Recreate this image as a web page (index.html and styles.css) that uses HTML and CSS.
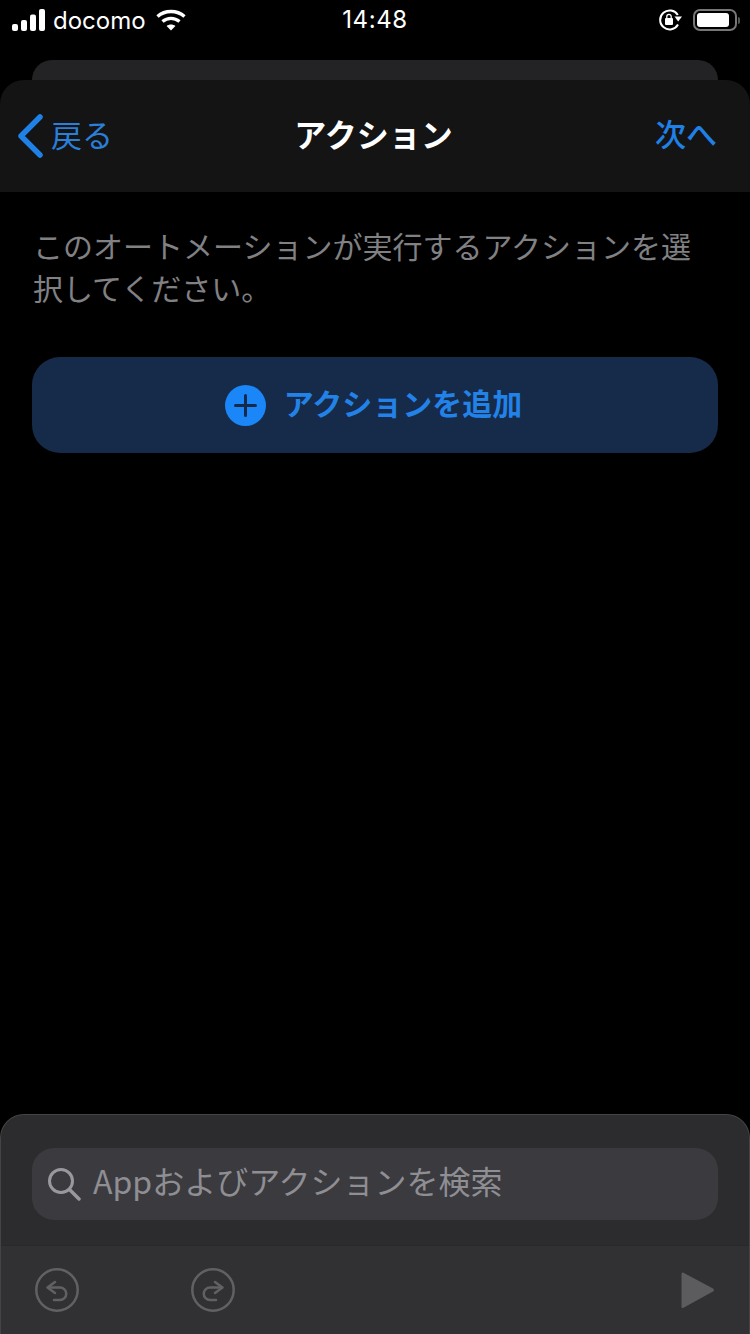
FILE: index.html
```html
<!DOCTYPE HTML>
<html lang="ja">
<head>
  <title>アクション</title>
  <meta content="text/html;charset=utf-8" http-equiv="Content-type"/>
  <meta name="viewport" content="width=device-width, initial-scale=1">
  <link rel="stylesheet" href="styles.css">
</head>
<body>
<div class="page">
  <!-- status bar -->
  <div class="status">
    <div class="status-left">
      <svg class="signal" width="34" height="22" viewBox="0 0 34 22" fill="#fff">
        <rect x="0" y="15" width="6" height="7" rx="2"/>
        <rect x="9" y="11" width="6" height="11" rx="2"/>
        <rect x="18" y="5.500" width="6" height="16.500" rx="2"/>
        <rect x="27" y="0" width="6" height="22" rx="2"/>
      </svg>
      <span class="carrier">docomo</span>
      <svg class="wifi" width="30" height="22" viewBox="0 0 30 22" fill="none" stroke="#fff" stroke-width="3.400">
        <path d="M1.500 7.500C9 .8 21 .8 28.500 7.500"/>
        <path d="M6.500 12.500C11.500 8.300 18.500 8.300 23.500 12.500"/>
        <path d="M15 21.500L10.600 17C13 15 17 15 19.400 17Z" fill="#fff" stroke="none"/>
      </svg>
    </div>
    <span class="clock">14:48</span>
    <div class="status-right">
      <svg width="24" height="22" viewBox="0 0 24 22" fill="none">
        <path d="M19 15.500A9.500 9.500 0 1 1 18.800 6" stroke="#fff" stroke-width="2"/>
        <path d="M15.500 7.500L23 7.500L19.200 12.500Z" fill="#fff"/>
        <rect x="6" y="9" width="8" height="7" rx="1" fill="#fff"/>
        <path d="M7.800 9.500V7.500a2.200 2.200 0 0 1 4.400 0V9.500" stroke="#fff" stroke-width="1.300"/>
      </svg>
      <div class="battery"><div class="battery-fill"></div></div>
      <div class="battery-tip"></div>
    </div>
  </div>

  <div class="back-card"></div>

  <!-- front sheet -->
  <div class="sheet">
    <div class="nav">
      <div class="nav-back">
        <svg width="28" height="44" viewBox="0 0 28 44" fill="none" stroke="#1f80e6" stroke-width="5.500" stroke-linecap="round" stroke-linejoin="round">
          <path d="M24 3L5 22L24 41"/>
        </svg>
        <span>戻る</span>
      </div>
      <div class="nav-title">アクション</div>
      <div class="nav-next">次へ</div>
    </div>
    <div class="content">
      <p class="intro">このオートメーションが実行するアクションを選択してください。</p>
      <div class="add-btn">
        <svg width="41" height="41" viewBox="0 0 41 41">
          <circle cx="20.500" cy="20.500" r="20.500" fill="#1a86f8"/>
          <path d="M10.500 20.500H30.500M20.500 10.500V30.500" stroke="#15294a" stroke-width="3" stroke-linecap="round"/>
        </svg>
        <span>アクションを追加</span>
      </div>
    </div>
  </div>

  <!-- bottom search panel -->
  <div class="panel">
    <div class="panel-search">
      <div class="search">
        <svg width="34" height="34" viewBox="0 0 34 34" fill="none" stroke="#98989e" stroke-width="3" stroke-linecap="round">
          <circle cx="14" cy="14" r="11.500"/>
          <path d="M22.500 22.500L32 32" stroke-width="3.500"/>
        </svg>
        <span>Appおよびアクションを検索</span>
      </div>
    </div>
    <div class="toolbar">
      <div class="toolbar-history">
        <svg width="44" height="44" viewBox="0 0 44 44" fill="none" stroke="#616164" stroke-width="2.500" stroke-linecap="round" stroke-linejoin="round">
          <circle cx="22" cy="22" r="20.700"/>
          <path d="M20 14L12.500 19.500L20 25"/>
          <path d="M13 19.500H25a6 6 0 0 1 0 12.500H19"/>
        </svg>
        <svg width="44" height="44" viewBox="0 0 44 44" fill="none" stroke="#616164" stroke-width="2.500" stroke-linecap="round" stroke-linejoin="round">
          <circle cx="22" cy="22" r="20.700"/>
          <path d="M24 14L31.500 19.500L24 25"/>
          <path d="M31 19.500H19a6 6 0 0 0 0 12.500H25"/>
        </svg>
      </div>
      <svg class="play" width="34" height="38" viewBox="0 0 34 38">
        <path d="M2 1.500L32 17.500Q34 19 32 20.500L2 37Q0.500 37.500 0.500 35.500V3Q0.500 1 2 1.500Z" fill="#5c5c5f"/>
      </svg>
    </div>
  </div>
</div>
</body>
</html>
```

FILE: styles.css
```css
html, body {
    margin: 0;
    padding: 0;
    background-color: #000;
}

body {
    font-family: "Noto Sans CJK JP", "Liberation Sans", sans-serif;
}

.page {
    width: 750px;
    height: 1334px;
    overflow: hidden;
    display: flex;
    flex-direction: column;
}

/* status bar */
.status {
    flex: none;
    height: 60px;
    display: grid;
    grid-template-columns: 1fr auto 1fr;
    align-items: start;
    padding-top: 9px;
    box-sizing: border-box;
    color: #fff;
}

.status-left {
    display: flex;
    align-items: center;
    height: 22px;
    padding-left: 12px;
}

.signal {
    margin-right: 7px;
}

.carrier {
    font-family: Inter, "Liberation Sans", sans-serif;
    font-size: 24px;
    margin-right: 10px;
}

.clock {
    font-family: Inter, "Liberation Sans", sans-serif;
    font-size: 24px;
    line-height: 22px;
    letter-spacing: 0.6px;
}

.status-right {
    display: flex;
    align-items: center;
    justify-content: flex-end;
    height: 22px;
    padding-right: 10px;
}

.battery {
    width: 44px;
    height: 22px;
    margin-left: 10px;
    border: 2px solid #77777a;
    border-radius: 7px;
    box-sizing: border-box;
    padding: 2px;
}

.battery-fill {
    width: 32px;
    height: 14px;
    background: #fff;
    border-radius: 3px;
}

.battery-tip {
    width: 2px;
    height: 7px;
    margin-left: 1px;
    background: #555;
    border-radius: 0 2px 2px 0;
}

.back-card {
    flex: none;
    height: 20px;
    margin: 0 32px;
    background: #232325;
    border-radius: 20px 20px 0 0;
}

/* front sheet */
.sheet {
    flex: none;
    height: 1034px;
}

.nav {
    height: 112px;
    display: grid;
    grid-template-columns: 1fr auto 1fr;
    align-items: center;
    background: #141415;
    border-radius: 24px 24px 0 0;
}

.nav-back {
    display: flex;
    align-items: center;
    padding-left: 16px;
    color: #2a7fd8;
    font-size: 31px;
    line-height: 44px;
}

.nav-back span {
    margin: 0 0 4px 7px;
}

.nav-title {
    color: #fff;
    font-size: 32px;
    font-weight: 700;
    line-height: 44px;
    padding: 0 3px 7px 0;
}

.nav-next {
    justify-self: end;
    padding: 0 33px 6px 0;
    color: #1f80e6;
    font-size: 31px;
    font-weight: 500;
    line-height: 44px;
}

.content {
    padding: 32px 32px 0;
}

.intro {
    margin: 0 0 49px;
    padding-left: 1px;
    color: #818184;
    font-size: 30px;
    line-height: 42px;
}

.add-btn {
    height: 96px;
    display: flex;
    align-items: center;
    justify-content: center;
    gap: 18px;
    padding-right: 3px;
    background: #162b49;
    border-radius: 28px;
    color: #2282e8;
    font-size: 30px;
    font-weight: 700;
}

.add-btn span {
    padding-bottom: 7px;
}

/* bottom panel */
.panel {
    flex: none;
    height: 220px;
    display: flex;
    flex-direction: column;
    background: #2c2c2e;
    border: solid #444446;
    border-width: 1px 1px 0;
    border-radius: 24px 24px 0 0;
    box-sizing: border-box;
}

.panel-search {
    height: 131px;
    padding: 33px 31px 0;
    box-sizing: border-box;
    border-bottom: 1px solid #29292b;
}

.search {
    height: 72px;
    display: flex;
    align-items: center;
    gap: 12px;
    padding-left: 15px;
    background: #3a3a3f;
    border-radius: 22px;
    color: #8e8e93;
    font-size: 32px;
}

.search span {
    padding-bottom: 9px;
}

.toolbar {
    flex: 1;
    display: flex;
    align-items: center;
    justify-content: space-between;
    padding: 0 34px;
    background: #313133;
}

.toolbar-history {
    display: flex;
    gap: 112px;
}
```
